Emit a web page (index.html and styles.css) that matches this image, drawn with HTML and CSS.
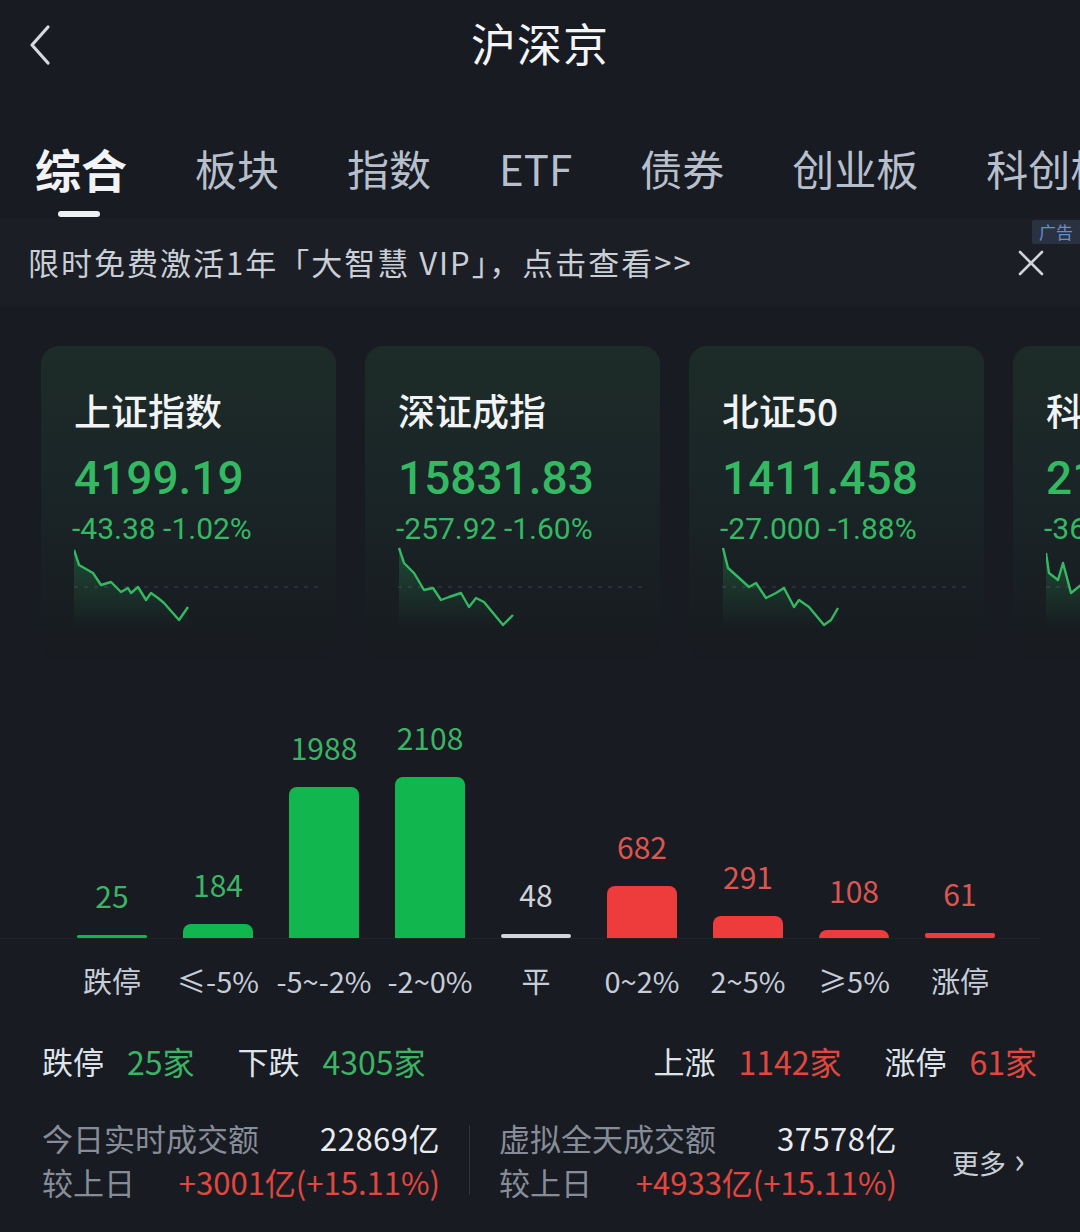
FILE: index.html
```html
<!DOCTYPE html>
<html lang="zh-CN">
<head>
<meta charset="utf-8">
<title>沪深京</title>
<link rel="stylesheet" href="styles.css">
</head>
<body>
<div class="page">
  <header class="topbar">
    <div class="back">
      <svg width="30" height="44" viewBox="0 0 30 44"><polyline points="22,4 6,22 22,40" fill="none" stroke="#d6dae0" stroke-width="3.2" stroke-linecap="round" stroke-linejoin="round"/></svg>
    </div>
    <h1 class="title">沪深京</h1>
    <div></div>
  </header>

  <nav class="tabs">
    <div class="tab active">综合</div>
    <div class="tab">板块</div>
    <div class="tab">指数</div>
    <div class="tab">ETF</div>
    <div class="tab">债券</div>
    <div class="tab">创业板</div>
    <div class="tab">科创板</div>
  </nav>

  <div class="adbar">
    <span class="ad-text">限时免费激活1年「大智慧 VIP」，点击查看&gt;&gt;</span>
    <svg class="ad-close" width="26" height="26" viewBox="0 0 26 26"><path d="M2 2 L24 24 M24 2 L2 24" stroke="#d0d4da" stroke-width="2.6" stroke-linecap="round"/></svg>
    <span class="ad-badge">广告</span>
  </div>

  <section class="cards">
    <div class="card">
      <div class="card-title">上证指数</div>
      <div class="card-value">4199.19</div>
      <div class="card-change">-43.38 -1.02%</div>
      <svg class="spark" width="250" height="82" viewBox="0 0 250 82">
        <defs><linearGradient id="g1" x1="0" y1="0" x2="0" y2="1"><stop offset="0" stop-color="#2bb35c" stop-opacity="0.28"/><stop offset="1" stop-color="#2bb35c" stop-opacity="0"/></linearGradient></defs>
        <line x1="0" y1="42" x2="248" y2="42" stroke="#30363d" stroke-width="1.5" stroke-dasharray="4 6"/>
        <polygon points="0,5 5,20 19,28 27,40 37,37 47,47 54,43 57,48 64,42 72,55 77,48 84,53 90,58 105,75 114,62 114,82 0,82" fill="url(#g1)"/>
        <polyline points="0,5 5,20 19,28 27,40 37,37 47,47 54,43 57,48 64,42 72,55 77,48 84,53 90,58 105,75 114,62" fill="none" stroke="#35b862" stroke-width="2.4" stroke-linejoin="round"/>
      </svg>
    </div>
    <div class="card">
      <div class="card-title">深证成指</div>
      <div class="card-value">15831.83</div>
      <div class="card-change">-257.92 -1.60%</div>
      <svg class="spark" width="250" height="82" viewBox="0 0 250 82">
        <defs><linearGradient id="g2" x1="0" y1="0" x2="0" y2="1"><stop offset="0" stop-color="#2bb35c" stop-opacity="0.28"/><stop offset="1" stop-color="#2bb35c" stop-opacity="0"/></linearGradient></defs>
        <line x1="0" y1="42" x2="248" y2="42" stroke="#30363d" stroke-width="1.5" stroke-dasharray="4 6"/>
        <polygon points="1,3 6,18 16,28 26,45 35,43 43,55 51,52 63,48 71,62 78,53 86,57 105,80 115,70 115,82 1,82" fill="url(#g2)"/>
        <polyline points="1,3 6,18 16,28 26,45 35,43 43,55 51,52 63,48 71,62 78,53 86,57 105,80 115,70" fill="none" stroke="#35b862" stroke-width="2.4" stroke-linejoin="round"/>
      </svg>
    </div>
    <div class="card">
      <div class="card-title">北证50</div>
      <div class="card-value">1411.458</div>
      <div class="card-change">-27.000 -1.88%</div>
      <svg class="spark" width="250" height="82" viewBox="0 0 250 82">
        <defs><linearGradient id="g3" x1="0" y1="0" x2="0" y2="1"><stop offset="0" stop-color="#2bb35c" stop-opacity="0.28"/><stop offset="1" stop-color="#2bb35c" stop-opacity="0"/></linearGradient></defs>
        <line x1="0" y1="42" x2="248" y2="42" stroke="#30363d" stroke-width="1.5" stroke-dasharray="4 6"/>
        <polygon points="1,3 6,23 16,32 27,42 34,38 44,53 54,48 62,43 72,62 77,55 87,62 102,80 109,75 116,63 116,82 1,82" fill="url(#g3)"/>
        <polyline points="1,3 6,23 16,32 27,42 34,38 44,53 54,48 62,43 72,62 77,55 87,62 102,80 109,75 116,63" fill="none" stroke="#35b862" stroke-width="2.4" stroke-linejoin="round"/>
      </svg>
    </div>
    <div class="card">
      <div class="card-title">科创综指</div>
      <div class="card-value">2127.49</div>
      <div class="card-change">-36.73 -1.70%</div>
      <svg class="spark" width="250" height="82" viewBox="0 0 250 82">
        <defs><linearGradient id="g4" x1="0" y1="0" x2="0" y2="1"><stop offset="0" stop-color="#2bb35c" stop-opacity="0.28"/><stop offset="1" stop-color="#2bb35c" stop-opacity="0"/></linearGradient></defs>
        <line x1="0" y1="42" x2="248" y2="42" stroke="#30363d" stroke-width="1.5" stroke-dasharray="4 6"/>
        <polygon points="0,8 3,28 12,35 17,18 25,48 35,40 45,55 55,50 70,66 85,60 100,76 112,68 112,82 0,82" fill="url(#g4)"/>
        <polyline points="0,8 3,28 12,35 17,18 25,48 35,40 45,55 55,50 70,66 85,60 100,76 112,68" fill="none" stroke="#35b862" stroke-width="2.4" stroke-linejoin="round"/>
      </svg>
    </div>
  </section>

  <section class="chart">
    <div class="bars">
      <div class="col"><span class="num green">25</span><div class="bar green-bar thin" style="height:3px"></div></div>
      <div class="col"><span class="num green">184</span><div class="bar green-bar" style="height:14px"></div></div>
      <div class="col"><span class="num green">1988</span><div class="bar green-bar" style="height:151px"></div></div>
      <div class="col"><span class="num green">2108</span><div class="bar green-bar" style="height:161px"></div></div>
      <div class="col"><span class="num gray">48</span><div class="bar gray-bar thin" style="height:4px"></div></div>
      <div class="col"><span class="num red">682</span><div class="bar red-bar" style="height:52px"></div></div>
      <div class="col"><span class="num red">291</span><div class="bar red-bar" style="height:22px"></div></div>
      <div class="col"><span class="num red">108</span><div class="bar red-bar" style="height:8px"></div></div>
      <div class="col"><span class="num red">61</span><div class="bar red-bar thin" style="height:5px"></div></div>
    </div>
    <div class="labels">
      <span>跌停</span><span>≤-5%</span><span>-5~-2%</span><span>-2~0%</span><span>平</span><span>0~2%</span><span>2~5%</span><span>≥5%</span><span>涨停</span>
    </div>
  </section>

  <section class="stats">
    <div class="stat-group">
      <span class="stat-label">跌停</span><span class="green">25家</span>
      <span class="stat-label">下跌</span><span class="green">4305家</span>
    </div>
    <div class="stat-group">
      <span class="stat-label">上涨</span><span class="red">1142家</span>
      <span class="stat-label">涨停</span><span class="red">61家</span>
    </div>
  </section>

  <section class="turnover">
    <div class="tblock">
      <div class="trow"><span class="tlabel">今日实时成交额</span><span class="tvalue">22869亿</span></div>
      <div class="trow"><span class="tlabel">较上日</span><span class="red">+3001亿(+15.11%)</span></div>
    </div>
    <div class="divider"></div>
    <div class="tblock">
      <div class="trow"><span class="tlabel">虚拟全天成交额</span><span class="tvalue">37578亿</span></div>
      <div class="trow"><span class="tlabel">较上日</span><span class="red">+4933亿(+15.11%)</span></div>
    </div>
    <div class="more">更多 <span class="chev">›</span></div>
  </section>
</div>
</body>
</html>
```

FILE: styles.css
```css
* { box-sizing: border-box; margin: 0; padding: 0; }

html, body {
  width: 1080px;
  height: 1232px;
  background: #181b21;
  overflow: hidden;
}

body {
  font-family: "Noto Sans CJK SC", "Noto Sans", sans-serif;
  color: #e6e9ee;
}

.page {
  width: 1080px;
  height: 1232px;
  overflow: hidden;
}

/* top bar */
.topbar {
  height: 90px;
  display: grid;
  grid-template-columns: 1fr auto 1fr;
  align-items: center;
  padding: 0 26px;
}
.back { display: flex; align-items: center; }
.title {
  font-size: 45px;
  font-weight: 400;
  color: #f4f5f7;
  line-height: 56px;
  letter-spacing: 1px;
  margin-top: -4px;
}

/* tabs */
.tabs {
  height: 128px;
  display: flex;
  gap: 68px;
  padding-left: 35px;
  white-space: nowrap;
  overflow: hidden;
}
.tab {
  position: relative;
  padding-top: 50px;
  font-size: 42px;
  line-height: 56px;
  color: #b7bfcc;
  flex-shrink: 0;
}
.tab.active {
  font-size: 46px;
  font-weight: 700;
  color: #f1f3f6;
}
.tab.active::after {
  content: "";
  position: absolute;
  left: 23px;
  top: 121px;
  width: 42px;
  height: 6px;
  border-radius: 3px;
  background: #eef0f3;
}

/* ad bar */
.adbar {
  position: relative;
  height: 88px;
  background: #1b1e24;
  display: flex;
  align-items: center;
  justify-content: space-between;
  padding: 0 36px 0 28px;
}
.ad-text {
  font-size: 31px;
  color: #c9ced7;
  line-height: 40px;
  letter-spacing: 2px;
  white-space: nowrap;
}
.ad-close { margin-top: 2px; }
.ad-badge {
  position: absolute;
  right: 0;
  top: 2px;
  width: 48px;
  height: 24px;
  background: #2a3242;
  color: #5e8fd8;
  font-size: 17px;
  line-height: 24px;
  text-align: center;
  border-radius: 2px 0 0 2px;
}

/* cards */
.cards {
  display: flex;
  gap: 29px;
  padding: 40px 0 0 41px;
  overflow: hidden;
}
.card {
  flex-shrink: 0;
  width: 295px;
  height: 315px;
  border-radius: 18px;
  padding: 40px 0 0 33px;
  background: linear-gradient(180deg, #1d2c28 0%, #1a2527 45%, #181e22 80%, #171a1f 100%);
  overflow: hidden;
  white-space: nowrap;
}
.card-title {
  font-size: 37px;
  line-height: 48px;
  font-weight: 500;
  color: #f1f3f5;
}
.card-value {
  font-family: Roboto, "Noto Sans", sans-serif;
  font-size: 46px;
  line-height: 56px;
  font-weight: 500;
  color: #35b862;
  margin-top: 16px;
}
.card-change {
  font-family: Roboto, "Noto Sans", sans-serif;
  font-size: 30px;
  line-height: 34px;
  color: #35b862;
  margin-top: 6px;
  margin-left: -2px;
}
.spark {
  display: block;
  margin-top: -1px;
}

/* chart */
.bars {
  height: 278px;
  display: flex;
  align-items: flex-end;
  padding-left: 59px;
  margin: 0 40px 0 0;
  border-bottom: 1px solid #1f232a;
}
.col {
  width: 106px;
  display: flex;
  flex-direction: column;
  align-items: center;
  justify-content: flex-end;
}
.num {
  font-size: 30px;
  line-height: 32px;
  margin-bottom: 24px;
}
.bar {
  width: 70px;
  border-radius: 8px 8px 0 0;
}
.bar.thin { border-radius: 2px; }
.green-bar { background: #12b64e; }
.red-bar { background: #ee3b3b; }
.gray-bar { background: #d2d5da; }
.green { color: #3bb563; }
.red { color: #e2473f; }
.num.red { color: #dc5650; }
.gray { color: #cfd2d7; }

.labels {
  display: flex;
  padding-left: 59px;
  margin-top: 23px;
}
.labels span {
  width: 106px;
  text-align: center;
  font-size: 29px;
  line-height: 36px;
  color: #c6cdd9;
  white-space: nowrap;
}

/* stats */
.stats {
  display: flex;
  justify-content: space-between;
  padding: 0 43px 0 42px;
  margin-top: 43px;
  font-size: 31px;
  line-height: 40px;
}
.stat-group { display: flex; }
.stat-group span { white-space: nowrap; }
.stat-label { color: #dfe3ea; margin-right: 23px; }
.stat-group .green, .stat-group .red { margin-right: 43px; font-size: 32px; }
.stat-group .green:last-child, .stat-group .red:last-child { margin-right: 0; }

/* turnover */
.turnover {
  display: flex;
  align-items: center;
  padding-left: 42px;
  margin-top: 35px;
}
.tblock { width: 398px; }
.trow {
  display: flex;
  justify-content: space-between;
  font-size: 31px;
  line-height: 44px;
  white-space: nowrap;
}
.tlabel { color: #878d98; }
.tvalue { color: #e9ecf0; letter-spacing: 0.5px; }
.divider {
  width: 1px;
  height: 70px;
  background: #30343b;
  margin: 0 29px;
}
.more {
  margin-left: 55px;
  font-size: 27px;
  color: #c9ced6;
  line-height: 40px;
  white-space: nowrap;
}
.chev { font-size: 36px; margin-left: 2px; }
```
